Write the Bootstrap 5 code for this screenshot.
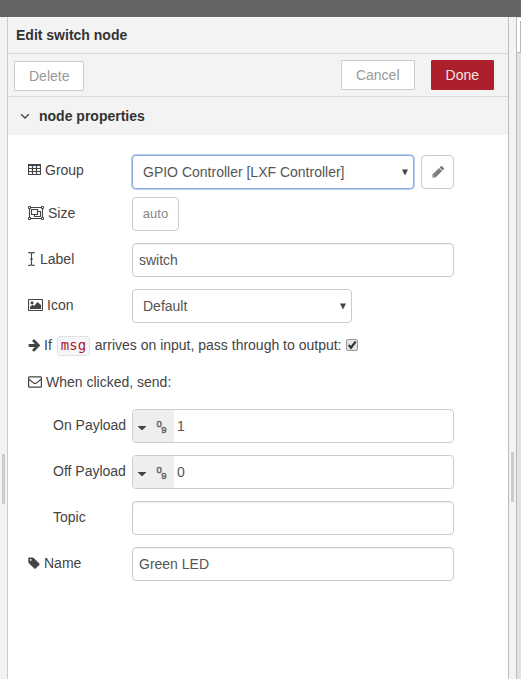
<!DOCTYPE html>
<html lang="en">
<head>
<meta charset="utf-8">
<meta name="viewport" content="width=device-width, initial-scale=1">
<title>Edit switch node</title>
<link href="https://cdn.jsdelivr.net/npm/bootstrap@5.3.0/dist/css/bootstrap.min.css" rel="stylesheet">
<style>
body{font:14px/20px "Liberation Sans",Arial,sans-serif;color:#444;background:#fff}
.topbar{height:17px;background:#656565}
.gutter{width:8px;background:#f3f3f3;border-right:1px solid #ccc;padding:0 0 0 2px}
.gutter-r{border-left:1px solid #bbb;border-right:1px solid #bbb;width:9px}
.grip{width:3px;height:50px;background:#ccc;margin-top:437px}
.gutter-r .grip{margin-top:435px}
.sidebar{width:4px;background:#e2e2e2}
.side-tab{height:35px;margin-top:1px;background:#fff;border-bottom:1px solid #bbb}
.side-tab i{display:block;width:1px;height:31px;margin:3px 0 0 3px;background:#bbb}
.tray-title{height:37px;background:#f3f3f3;border-bottom:1px solid #d9d9d9;color:#333;padding:0 8px}
.tray-tools{height:43px;background:#f3f3f3;border-bottom:1px solid #d9d9d9;padding:6px 14px 0 6px}
.section-head{height:38px;background:#f3f3f3;color:#333;padding-left:12px}
.tool{--bs-btn-font-size:14px;--bs-btn-line-height:20px;--bs-btn-padding-y:4px;--bs-btn-padding-x:14px;--bs-btn-border-radius:1px;--bs-btn-color:#999;--bs-btn-bg:#fff;--bs-btn-border-color:#ccc;height:30px}
.tool-del{margin-top:1px}
.tool-done{--bs-btn-color:#f3e5e6;--bs-btn-bg:#ad1f2a;--bs-btn-border-color:#ad1f2a}
.editor{padding:20px 0 0 20px}
.line{height:34px;margin-bottom:12px}
.caption{width:104px;height:32px;gap:4px;white-space:nowrap}
.caption-high{height:30px}
.sub{padding-left:25px}
.field{width:322px;height:34px;font-size:14px;line-height:20px;color:#555;border:1px solid #ccc;border-radius:4px;padding:6px;box-shadow:inset 0 1px 1px rgba(0,0,0,.06)}
.picker{height:34px;border:1px solid #ccc;border-radius:4px;color:#555;padding:0 5px 0 10px;background:#fff}
.picker-focus{width:282px;border:1px solid #8daedb;box-shadow:0 0 0 1px #b5cdec}
.picker-icon{width:220px}
.mini{height:34px;border:1px solid #ccc;border-radius:4px;color:#888;background:#fff;font-size:13px;padding:0}
.mini-edit{width:33px;margin-right:54px}
.mini-size{width:47px}
.typed{width:322px;height:34px;border:1px solid #ccc;border-radius:4px;color:#555;overflow:hidden}
.kind{width:41px;background:#eee;padding-left:5px}
.typed input{width:270px;border:0;padding:0 0 0 3px;color:#555;outline:0}
.msg-row{height:20px;gap:4px;white-space:nowrap}
.when-row{margin:17px 0}
.token{font:14px/16px "DejaVu Sans Mono",monospace;color:#ad1625;background:#f7f7f9;border:1px solid #e1e1e8;border-radius:3px;padding:0 3px;height:20px;width:33px;display:inline-block;margin:2px 1px 0}
svg{display:block;flex:none}
</style>
<script src="https://cdn.jsdelivr.net/npm/bootstrap@5.3.0/dist/js/bootstrap.bundle.min.js"></script>
</head>
<body class="vh-100 overflow-hidden d-flex flex-column">
<header class="topbar flex-shrink-0"></header>
<div class="d-flex flex-grow-1">
  <div class="gutter flex-shrink-0"><div class="grip"></div></div>
  <main class="flex-grow-1">
    <div class="tray-title d-flex align-items-center fw-bold">Edit switch node</div>
    <div class="tray-tools d-flex align-items-start">
      <button class="btn tool tool-del me-auto">Delete</button>
      <button class="btn tool me-3">Cancel</button>
      <button class="btn tool tool-done">Done</button>
    </div>
    <div class="section-head d-flex align-items-center fw-bold">
      <svg width="19" height="10"><path d="M1.2 3.2l3.8 3.8 3.8-3.8" fill="none" stroke="#444" stroke-width="1.3"/></svg>node properties
    </div>
    <form class="editor">
      <div class="line d-flex mb-2">
        <label class="caption caption-high d-flex align-items-center">
          <svg width="13" height="12"><path d="M.5.5h12v10H.5zM1 4.500h11M1 7.500h11M4.500 1v9M8.500 1v9" fill="none" stroke="#444" stroke-width="1.200"/><path d="M0 0h13v2H0z" fill="#444"/></svg>Group</label>
        <div class="picker picker-focus d-flex align-items-center justify-content-between"><span>GPIO Controller [LXF Controller]</span><svg width="6" height="7"><path d="M0 .5h6L3 6.5z" fill="#444"/></svg></div>
        <button type="button" class="mini mini-edit d-flex align-items-center justify-content-center ms-auto"><svg width="12" height="12"><path d="M.5 11.500v-3L7 2l3 3-6.500 6.500z" fill="#777"/><path d="M7.600 1.400L8.800.300q.6-.5 1.200 0l1.700 1.700q.5.600 0 1.200l-1.100 1.200z" fill="#777"/><path d="M1.400 8.900v1.700h1.700z" fill="#ddd"/><path d="M3 8l4.500-4.500" stroke="#aaa" stroke-width=".6"/></svg></button>
      </div>
      <div class="line d-flex">
        <label class="caption d-flex align-items-center">
          <svg width="16" height="14"><path d="M1.500 1.500h13v11h-13zM3.500 3.500h6v5h-6zM9.500 5.500h3v5h-6v-2" fill="none" stroke="#444" stroke-width="1.100"/><path d="M.5.5h2v2h-2zM13.500.5h2v2h-2zM.5 11.500h2v2h-2zM13.500 11.500h2v2h-2z" fill="#fff" stroke="#444"/></svg>Size</label>
        <button type="button" class="mini mini-size">auto</button>
      </div>
      <div class="line d-flex">
        <label class="caption d-flex align-items-center">
          <svg width="8" height="14"><path d="M.3.6h1.500q1.700 0 1.700 1.500v9.800q0 1.500-1.700 1.500H.3M6.700.6H5.200q-1.700 0-1.700 1.500M6.700 13.400H5.200q-1.700 0-1.700-1.500M2 7h3" fill="none" stroke="#444" stroke-width="1.100"/></svg>Label</label>
        <input class="field" value="switch">
      </div>
      <div class="line d-flex">
        <label class="caption d-flex align-items-center">
          <svg width="15" height="12"><rect x=".5" y=".5" width="14" height="11" rx=".8" fill="none" stroke="#444" stroke-width="1.200"/><circle cx="4" cy="3.700" r="1.500" fill="#444"/><path d="M2 10V8l2.500-2.500L6 7l3.500-4L13 6v4z" fill="#444"/></svg>Icon</label>
        <div class="picker picker-icon d-flex align-items-center justify-content-between"><span>Default</span><svg width="6" height="7"><path d="M0 .5h6L3 6.5z" fill="#444"/></svg></div>
      </div>
      <div class="msg-row d-flex align-items-center">
        <svg width="12" height="13" viewBox="64 140 1536 1664"><path fill="#444" d="M1600 960q0 54-37 91l-651 651q-39 37-91 37-51 0-90-37l-75-75q-38-38-38-91t38-91l293-293H245q-52 0-84.500-37.500T128 1024V896q0-53 32.500-90.500T245 768h704L656 474q-38-36-38-90t38-90l75-75q38-38 90-38 53 0 91 38l651 651q37 35 37 90z"/></svg>
        <span>If</span><code class="token">msg</code><span>arrives on input, pass through to output:</span>
        <svg width="12" height="12"><rect x=".5" y=".5" width="11" height="11" rx="1.5" fill="#e4e4e4" stroke="#999"/><path d="M2.700 6l2.300 2.700L9.600 2.700" fill="none" stroke="#333" stroke-width="2.200"/></svg>
      </div>
      <div class="msg-row when-row d-flex align-items-center">
        <svg width="14" height="12"><rect x=".6" y=".9" width="12.800" height="10.300" rx=".8" fill="none" stroke="#444" stroke-width="1.200"/><path d="M1 3.200l4.600 3.900q1.400 1 2.800 0L13 3.200" fill="none" stroke="#444" stroke-width="1.200"/></svg>When clicked, send:
      </div>
      <div class="line d-flex">
        <label class="caption sub d-flex align-items-center">On Payload</label>
        <div class="typed d-flex"><div class="kind d-flex align-items-center flex-shrink-0"><svg width="36" height="20"><path d="M0 10h8v.5L4.500 14h-1L0 10.500z" fill="#444"/><g fill="#666" stroke="#666" stroke-width=".5" font-family="Liberation Sans" font-size="9.500"><text x="18.500" y="10.500">0</text><text x="23.200" y="17">9</text></g></svg></div><input value="1"></div>
      </div>
      <div class="line d-flex">
        <label class="caption sub d-flex align-items-center">Off Payload</label>
        <div class="typed d-flex"><div class="kind d-flex align-items-center flex-shrink-0"><svg width="36" height="20"><path d="M0 10h8v.5L4.500 14h-1L0 10.500z" fill="#444"/><g fill="#666" stroke="#666" stroke-width=".5" font-family="Liberation Sans" font-size="9.500"><text x="18.500" y="10.500">0</text><text x="23.200" y="17">9</text></g></svg></div><input value="0"></div>
      </div>
      <div class="line d-flex">
        <label class="caption sub d-flex align-items-center">Topic</label>
        <input class="field">
      </div>
      <div class="line d-flex">
        <label class="caption d-flex align-items-center">
          <svg width="12" height="12" viewBox="128 192 1536 1600"><path fill="#444" fill-rule="evenodd" d="M576 576q0-53-37.500-90.500t-90.500-37.500-90.500 37.500-37.500 90.500 37.500 90.500 90.500 37.500 90.500-37.500 37.500-90.500zm1067 576q0 53-37 90l-491 492q-39 37-91 37-53 0-90-37l-715-716q-38-37-64.500-101t-26.500-117v-416q0-52 38-90t90-38h416q53 0 117 26.500t102 64.500l715 714q37 39 37 91z"/></svg>Name</label>
        <input class="field" value="Green LED">
      </div>
    </form>
  </main>
  <div class="gutter gutter-r flex-shrink-0"><div class="grip"></div></div>
  <aside class="sidebar flex-shrink-0"><div class="side-tab d-flex"><i></i></div></aside>
</div>
</body>
</html>
